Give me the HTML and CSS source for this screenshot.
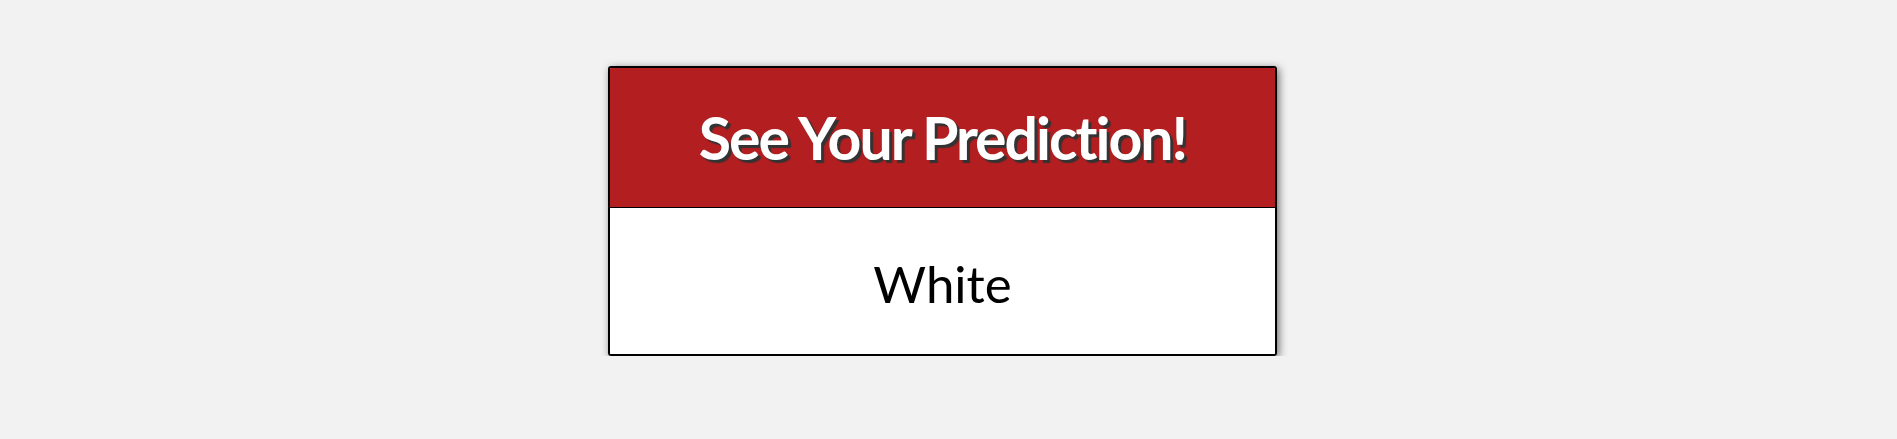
FILE: index.html
```html
<!DOCTYPE html>
<html>
<head>
<meta charset="utf-8">
<link rel="stylesheet" href="styles.css">
</head>
<body>
<div class="page">
  <div class="card">
    <div class="card-header"><h1 class="title">See Your Prediction!</h1></div>
    <div class="card-body"><p class="result">White</p></div>
  </div>
</div>
</body>
</html>
```
FILE: styles.css
```css
html, body {
  margin: 0;
  padding: 0;
  background: #f2f2f2;
}
.page {
  display: flex;
  justify-content: center;
  padding-top: 66px;
  padding-right: 12px;
}
.card {
  width: 665px;
  border: 2px solid #000;
  border-radius: 3px;
  overflow: hidden;
  box-shadow: 2px 2px 8px rgba(0,0,0,0.55);
  font-family: Lato, "Noto Sans", sans-serif;
  font-variant-ligatures: none;
}
.card-header {
  background: #b31e20;
  height: 139px;
  border-bottom: 1px solid #000;
  display: flex;
  align-items: center;
  justify-content: center;
}
.title {
  margin: 0;
  color: #fff;
  font-size: 59px;
  font-weight: 700;
  letter-spacing: -2px;
  text-shadow: 3px 3px 1px #333;
  line-height: 1;
}
.card-body {
  background: #fff;
  height: 146px;
  display: flex;
  align-items: center;
  justify-content: center;
}
.result {
  margin: 0;
  padding-top: 4px;
  color: #000;
  font-size: 51px;
  line-height: 1;
}
```
